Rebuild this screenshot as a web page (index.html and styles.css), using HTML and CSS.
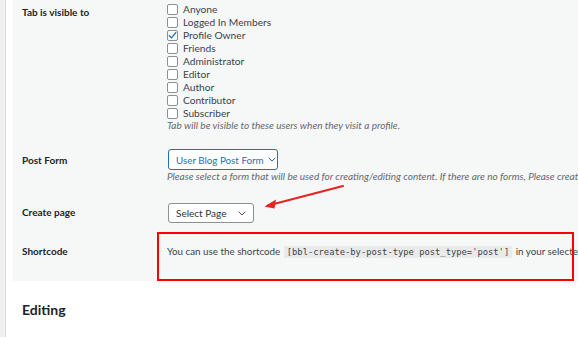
FILE: index.html
```html
<!DOCTYPE html>
<html>
<head>
<meta charset="utf-8">
<link rel="stylesheet" href="styles.css">
</head>
<body>
<div class="frame">
  <div class="inner">
    <div class="panel">
      <div class="row row-visible">
        <div class="label">Tab is visible to</div>
        <div class="field">
          <ul class="checks">
            <li><span class="box"></span>Anyone</li>
            <li><span class="box"></span>Logged In Members</li>
            <li><span class="box checked"><svg viewBox="0 0 11 11" width="11" height="11"><path d="M2.3 5.6 L4.4 7.9 L8.8 2.6" fill="none" stroke="#2271b1" stroke-width="1.4" stroke-linecap="round" stroke-linejoin="round"/></svg></span>Profile Owner</li>
            <li><span class="box"></span>Friends</li>
            <li><span class="box"></span>Administrator</li>
            <li><span class="box"></span>Editor</li>
            <li><span class="box"></span>Author</li>
            <li><span class="box"></span>Contributor</li>
            <li><span class="box"></span>Subscriber</li>
          </ul>
          <p class="desc">Tab will be visible to these users when they visit a profile.</p>
        </div>
      </div>

      <div class="row row-form">
        <div class="label">Post Form</div>
        <div class="field">
          <div class="select select-active">User Blog Post Form<svg class="chev" viewBox="0 0 8 5" width="8" height="5"><path d="M0.7 0.8 L4 4 L7.3 0.8" fill="none" stroke="currentColor" stroke-width="1"/></svg></div>
          <p class="desc">Please select a form that will be used for creating/editing content. If there are no forms, Please create one first.</p>
        </div>
      </div>

      <div class="row row-page">
        <div class="label">Create page</div>
        <div class="field">
          <div class="select select-page">Select Page<svg class="chev" viewBox="0 0 8 5" width="8" height="5"><path d="M0.7 0.8 L4 4 L7.3 0.8" fill="none" stroke="currentColor" stroke-width="1"/></svg></div>
        </div>
      </div>

      <div class="row row-short">
        <div class="label">Shortcode</div>
        <div class="field">
          <p class="text">You can use the shortcode <code>[bbl-create-by-post-type post_type='post']</code> in your selected page.</p>
        </div>
      </div>
    </div>
    <h2 class="section">Editing</h2>
  </div>
</div>
<div class="annot-box"></div>
<svg class="annot-arrow" width="578" height="337" viewBox="0 0 578 337">
  <line x1="343" y1="186" x2="268" y2="205.5" stroke="#e8221f" stroke-width="2" stroke-linecap="round"/>
  <path d="M264.5 206.5 L276 199.5 L274.5 208.5 Z" fill="#e8221f"/>
</svg>
</body>
</html>
```
FILE: styles.css
```css
* { box-sizing: border-box; }
html, body {
  margin: 0;
  padding: 0;
  width: 578px;
  height: 337px;
  overflow: hidden;
  background: #fff;
}
body {
  font-family: "Lato", "Noto Sans", sans-serif;
  font-size: 10px;
  color: #3c434a;
  position: relative;
}
.frame {
  border-left: 5px solid #f0f0f1;
  height: 337px;
}
.inner {
  border-left: 1px solid #dcdcde;
  padding-left: 7px;
  height: 337px;
}
.panel {
  background: #f6f7f7;
  padding: 3px 0 22px 9px;
  width: 700px;
}
.row {
  display: grid;
  grid-template-columns: 145px 1fr;
  white-space: nowrap;
}
.label {
  font-weight: 700;
  color: #1d2327;
  line-height: 13px;
  padding-top: 3px;
}
.checks {
  list-style: none;
  margin: 0;
  padding: 0;
}
.checks li {
  display: flex;
  align-items: center;
  gap: 5px;
  height: 13px;
  line-height: 13px;
  font-size: 10.2px;
}
.box {
  width: 11px;
  height: 11px;
  border: 1px solid #8c8f94;
  border-radius: 2px;
  background: #fff;
  display: flex;
  align-items: center;
  justify-content: center;
  flex: none;
}
.box svg { display: block; margin: -1px; }
.desc {
  margin: 0;
  font-style: italic;
  color: #646970;
  line-height: 13px;
}
.row-visible .desc { margin-top: -1px; }
.row-form { margin-top: 17px; }
.row-form .label { padding-top: 5px; }
.select {
  display: inline-flex;
  align-items: center;
  margin-left: 1px;
  height: 21px;
  padding: 0 7px;
  border: 1px solid #8c8f94;
  border-radius: 3px;
  background: #fff;
  color: #2c3338;
}
.select-active {
  border-color: #2271b1;
  color: #2271b1;
  font-size: 9.8px;
  width: 110px;
  padding: 0 6px 0 7px;
  justify-content: space-between;
}
.select .chev { margin-left: 4px; flex: none; }
.row-form .desc { display: block; margin-top: 0; }
.row-page { margin-top: 20px; }
.row-page .label { padding-top: 3px; }
.select-page { height: 20px; width: 86px; justify-content: space-between; }
.select-page .chev { color: #50575e; }
.row-short { margin-top: 22px; }
.row-short .label { padding-top: 0; }
.text {
  margin: 0;
  line-height: 13px;
  font-size: 9.8px;
}
code {
  font-family: "DejaVu Sans Mono", "Liberation Mono", monospace;
  font-size: 8.8px;
  background: #eaeaeb;
  color: #3c434a;
  padding: 1px 3px;
  margin: 0 1px;
}
.section {
  margin: 20px 0 0 0;
  padding-left: 9px;
  font-size: 14px;
  line-height: 18px;
  font-weight: 700;
  color: #1d2327;
}
.annot-box {
  position: absolute;
  left: 157px;
  top: 232px;
  width: 417px;
  height: 49px;
  border: 2px solid #f00;
}
.annot-arrow {
  position: absolute;
  left: 0;
  top: 0;
  pointer-events: none;
}
```
